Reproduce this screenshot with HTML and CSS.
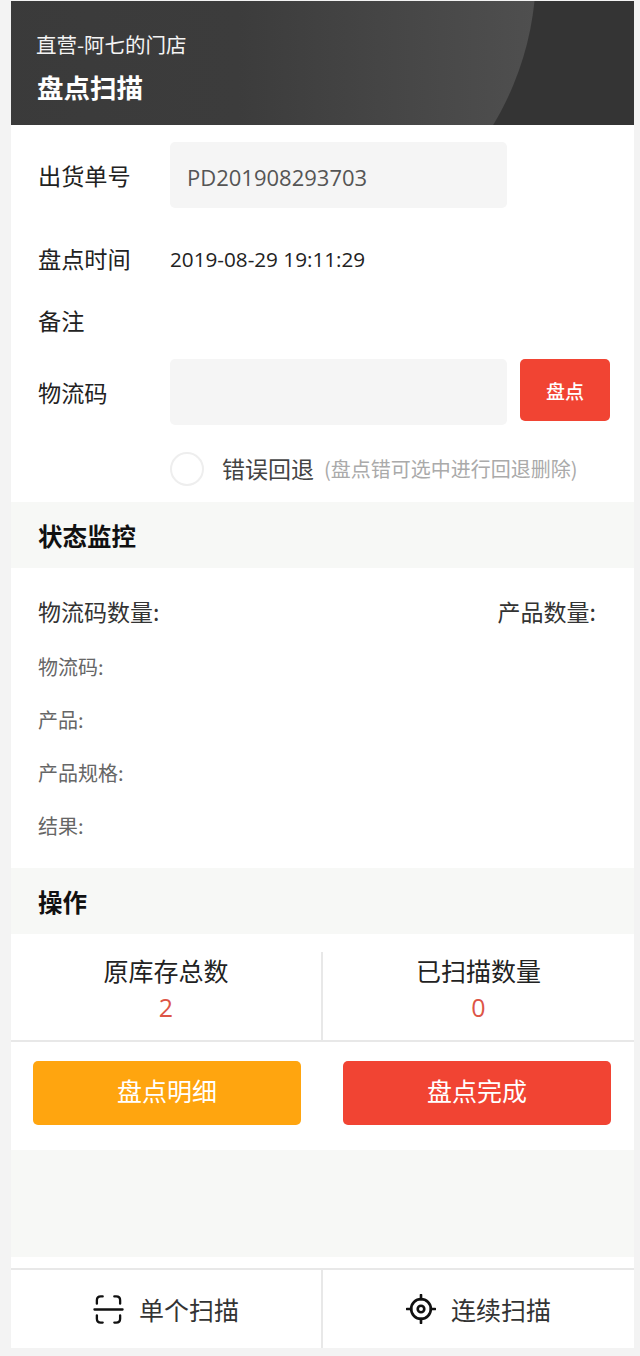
FILE: index.html
```html
<!DOCTYPE html>
<html lang="zh-CN">
<head>
<meta charset="utf-8">
<title>盘点扫描</title>
<link rel="stylesheet" href="styles.css">
</head>
<body>
<div class="page">
  <header class="header">
    <div class="store">直营-阿七的门店</div>
    <h1 class="title">盘点扫描</h1>
  </header>
  <section class="form">
    <div class="row row-order">
      <span class="label">出货单号</span>
      <div class="field">PD201908293703</div>
    </div>
    <div class="row row-time">
      <span class="label">盘点时间</span>
      <span class="time">2019-08-29 19:11:29</span>
    </div>
    <div class="row row-note">
      <span class="label">备注</span>
    </div>
    <div class="row row-code">
      <span class="label label-code">物流码</span>
      <div class="field"></div>
      <button class="btn-check">盘点</button>
    </div>
    <div class="rollback">
      <span class="radio"></span>
      <span class="rollback-text">错误回退</span>
      <span class="rollback-hint">(盘点错可选中进行回退删除)</span>
    </div>
  </section>
  <h2 class="section-title">状态监控</h2>
  <section class="monitor">
    <div class="counts">
      <span>物流码数量:</span>
      <span>产品数量:</span>
    </div>
    <div class="info">物流码:</div>
    <div class="info">产品:</div>
    <div class="info">产品规格:</div>
    <div class="info">结果:</div>
  </section>
  <h2 class="section-title">操作</h2>
  <section class="stats">
    <div class="stat stat-left">
      <div class="stat-name">原库存总数</div>
      <div class="stat-value">2</div>
    </div>
    <div class="stat">
      <div class="stat-name">已扫描数量</div>
      <div class="stat-value">0</div>
    </div>
  </section>
  <section class="actions">
    <button class="btn btn-orange">盘点明细</button>
    <button class="btn btn-red">盘点完成</button>
  </section>
  <div class="spacer"></div>
  <nav class="tabs">
    <div class="tab tab-left">
      <svg class="icon" viewBox="0 0 32 32" width="31" height="31" fill="none" stroke="#111" stroke-width="2.4" stroke-linecap="round" stroke-linejoin="round">
        <path d="M4 10V6.500Q4 2.500 8 2.500H10"/>
        <path d="M22 2.500H24Q28 2.500 28 6.500V10"/>
        <path d="M1.500 16H30.500"/>
        <path d="M4 22V25.500Q4 29.500 8 29.500H10"/>
        <path d="M22 29.500H24Q28 29.500 28 25.500V22"/>
      </svg>
      <span>单个扫描</span>
    </div>
    <div class="tab">
      <svg class="icon" viewBox="0 0 32 32" width="30" height="30" fill="none" stroke="#111" stroke-width="2.800" stroke-linecap="round">
        <circle cx="16" cy="16" r="10.500"/>
        <circle cx="16" cy="16" r="3.500"/>
        <path d="M16 1V5.500M16 26.500V31M1 16H5.500M26.500 16H31"/>
      </svg>
      <span>连续扫描</span>
    </div>
  </nav>
</div>
</body>
</html>
```

FILE: styles.css
```css
* { box-sizing: border-box; }
html, body { margin: 0; padding: 0; }
body {
  background: #f3f3f3;
  font-family: "Noto Sans CJK SC", "Open Sans", sans-serif;
  color: #222;
  height: 1356px;
  overflow: hidden;
}
.page {
  margin: 1px 6px 0 11px;
  background: #fff;
  height: 1347px;
  display: flex;
  flex-direction: column;
}
.header {
  position: relative;
  overflow: hidden;
  height: 124px;
  padding: 30px 25px 0;
  background: #343434;
  color: #fff;
}
.header::before {
  content: "";
  position: absolute;
  left: -71px;
  top: -328px;
  width: 596px;
  height: 596px;
  border-radius: 50%;
  background: linear-gradient(90deg, #3a3a3a 0%, #3c3c3c 50%, #4f4f4f 100%);
}
.store, .title { position: relative; }
.store { font-size: 20.500px; line-height: 26px; color: #f4f4f4; }
.title { margin: 10px 0 0 1px; font-size: 26.500px; line-height: 40px; font-weight: 700; }
.form { height: 377px; padding: 17px 0 0 27px; }
.row { display: flex; align-items: center; }
.label { width: 132px; font-size: 23.200px; line-height: 34px; flex: none; }
.field {
  width: 337px;
  height: 66px;
  background: #f5f5f5;
  border-radius: 5px;
  padding-left: 17px;
  font-family: "Open Sans", sans-serif;
  font-size: 22px;
  line-height: 70px;
  color: #555;
}
.row-time { margin-top: 15px; height: 70px; }
.time { padding-top: 2px; font-family: "Open Sans", sans-serif; font-size: 20.700px; color: #222; }
.row-note { height: 54px; }
.row-code { margin-top: 12px; align-items: flex-start; }
.label-code { margin-top: 16px; }
.btn-check {
  margin-left: 13px;
  width: 90px;
  height: 62px;
  border: 0;
  border-radius: 5px;
  background: #f14433;
  color: #fff;
  font: 500 19px "Noto Sans CJK SC", sans-serif;
}
.rollback { display: flex; align-items: center; margin: 26px 0 0 132px; height: 36px; }
.radio {
  width: 34px;
  height: 34px;
  border: 2px solid #eee;
  border-radius: 50%;
  flex: none;
}
.rollback-text { margin-left: 18px; padding-bottom: 3px; font-size: 23px; color: #444; }
.rollback-hint { margin-left: 10px; padding-bottom: 1px; font-size: 20px; color: #aaa; white-space: nowrap; }
.section-title {
  margin: 0;
  height: 66px;
  padding-left: 27px;
  background: #f7f8f6;
  font-size: 24.500px;
  font-weight: 700;
  line-height: 68px;
  color: #111;
}
.monitor { height: 300px; padding: 26px 38px 0 27px; }
.counts { display: flex; justify-content: space-between; font-size: 23px; line-height: 34px; color: #333; height: 46px; }
.info { font-size: 20px; line-height: 53px; color: #666; }
.stats { display: flex; height: 108px; padding-top: 18px; border-bottom: 2px solid #e8e8e8; }
.stat { flex: 1; text-align: center; }
.stat-left { flex: none; width: 312px; border-right: 2px solid #e8e8e8; }
.stat-name { font-size: 25px; line-height: 36px; color: #222; }
.stat-value { margin-top: 2px; font-family: "Open Sans", sans-serif; font-size: 25px; line-height: 34px; color: #dd5546; }
.actions { display: flex; justify-content: space-between; padding: 19px 23px 25px 22px; }
.btn {
  width: 268px;
  height: 64px;
  border: 0;
  border-radius: 5px;
  padding: 0 0 6px;
  color: #fff;
  font: 25px "Noto Sans CJK SC", sans-serif;
}
.btn-orange { background: #ffa50f; }
.btn-red { background: #f14433; }
.spacer { height: 107px; background: #f7f8f6; margin-bottom: 11px; flex: none; }
.tabs { display: flex; height: 80px; border-top: 2px solid #e8e8e8; }
.tab {
  flex: 1;
  display: flex;
  align-items: center;
  justify-content: center;
  gap: 15px;
  font-size: 25px;
  color: #333;
}
.tab-left { flex: none; width: 312px; border-right: 2px solid #e8e8e8; }
```
